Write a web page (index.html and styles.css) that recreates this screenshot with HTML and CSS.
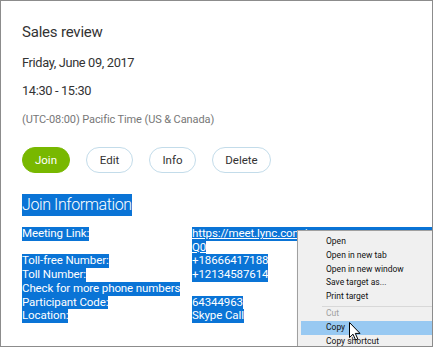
FILE: index.html
```html
<!DOCTYPE html>
<html lang="en">
<head>
  <meta charset="UTF-8">
  <title>Sales review</title>
  <link rel="stylesheet" href="styles.css">
</head>
<body>
  <div class="card">
    <div class="title">Sales review</div>
    <div class="date">Friday, June 09, 2017</div>
    <div class="time">14:30 - 15:30</div>
    <div class="zone">(UTC-08:00) Pacific Time (US &amp; Canada)</div>

    <div class="actions">
      <button class="btn btn-join">Join</button>
      <button class="btn btn-edit">Edit</button>
      <button class="btn btn-info">Info</button>
      <button class="btn btn-delete">Delete</button>
    </div>

    <div class="join-head"><span class="sel">Join Information</span></div>

    <div class="info">
      <div class="cell"><span class="sel">Meeting Link:</span></div>
      <div class="cell">
        <span class="sel link wide">https://meet.lync.com/</span>
        <span class="sel link">Q0</span>
      </div>
      <div class="cell"><span class="sel">Toll-free Number:</span></div>
      <div class="cell"><span class="sel">+18666417188</span></div>
      <div class="cell"><span class="sel">Toll Number:</span></div>
      <div class="cell"><span class="sel">+12134587614</span></div>
      <div class="cell"><span class="sel">Check for more phone numbers</span></div>
      <div class="cell"></div>
      <div class="cell"><span class="sel">Participant Code:</span></div>
      <div class="cell"><span class="sel">64344963</span></div>
      <div class="cell"><span class="sel">Location:</span></div>
      <div class="cell"><span class="sel">Skype Call</span></div>
    </div>

    <!-- browser context menu over the link -->
    <div class="menu">
      <div class="item">Open</div>
      <div class="item">Open in new tab</div>
      <div class="item">Open in new window</div>
      <div class="item">Save target as...</div>
      <div class="item">Print target</div>
      <div class="sep"></div>
      <div class="item disabled">Cut</div>
      <div class="item active">Copy</div>
      <div class="item">Copy shortcut</div>
    </div>

    <svg class="cursor" width="12" height="19" viewBox="0 0 12 19">
      <path d="M0.5 0.5 L0.5 15.5 L4 12.2 L6.6 18 L8.8 17 L6.3 11.4 L11 11.4 Z" fill="#fff" stroke="#000" stroke-width="1"/>
    </svg>
  </div>
</body>
</html>
```

FILE: styles.css
```css
body {
  margin: 0;
  background: #fff;
  font-family: Roboto, "Open Sans", sans-serif;
  color: #333;
}

.card {
  position: relative;
  width: 433px;
  height: 347px;
  box-sizing: border-box;
  border: 1px solid #8c8c8c;
  padding: 19px 0 0 21px;
  overflow: hidden;
}

.title {
  font-size: 15px;
  line-height: 24px;
  letter-spacing: -0.2px;
}

.date {
  margin-top: 8px;
  font-size: 12.8px;
  line-height: 22px;
  letter-spacing: -0.35px;
}

.time {
  margin-top: 6px;
  font-size: 12.8px;
  line-height: 22px;
  letter-spacing: -0.35px;
}

.zone {
  margin-top: 9px;
  font-size: 11px;
  line-height: 18px;
  letter-spacing: -0.1px;
  color: #777;
}

.actions {
  display: flex;
  gap: 16px;
  margin-top: 18px;
}

.btn {
  height: 26px;
  padding: 0;
  border: 1.5px solid #c3dcea;
  border-radius: 13px;
  background: #fff;
  font-family: inherit;
  font-size: 11.5px;
  color: #333;
}

.btn-join {
  width: 48px;
  background: #78b800;
  border-color: #78b800;
  color: #fff;
}

.btn-edit {
  width: 47px;
}

.btn-info {
  width: 47px;
}

.btn-delete {
  width: 59px;
}

.join-head {
  margin-top: 21px;
  font-size: 16px;
  font-weight: 300;
  line-height: 22px;
  letter-spacing: -0.4px;
}

.sel {
  display: inline-block;
  background: #0a74d6;
  color: #fff;
}

.info {
  display: grid;
  grid-template-columns: 170px 1fr;
  margin-top: 11px;
  font-size: 11.5px;
  line-height: 13.7px;
  letter-spacing: -0.1px;
}

.cell .sel {
  display: table;
}

.link {
  text-decoration: underline;
}

.wide {
  width: 400px;
  white-space: nowrap;
}

.menu {
  position: absolute;
  left: 296px;
  top: 229px;
  width: 150px;
  height: 130px;
  box-sizing: border-box;
  padding: 4px 0 0 0;
  background: #f0f0f0;
  border: 1px solid #a0a0a0;
  box-shadow: 1px 1px 2px rgba(0, 0, 0, 0.2);
  font-size: 8.5px;
  color: #111;
}

.item {
  height: 13.8px;
  line-height: 13.8px;
  margin-left: 3px;
  padding-left: 25px;
}

.item.disabled {
  color: #a0a0a0;
}

.item.active {
  background: #98c9f2;
}

.sep {
  height: 1px;
  margin: 2px 0 0 24px;
  background: #d8d8d8;
}

.cursor {
  position: absolute;
  left: 348px;
  top: 321px;
}
```
